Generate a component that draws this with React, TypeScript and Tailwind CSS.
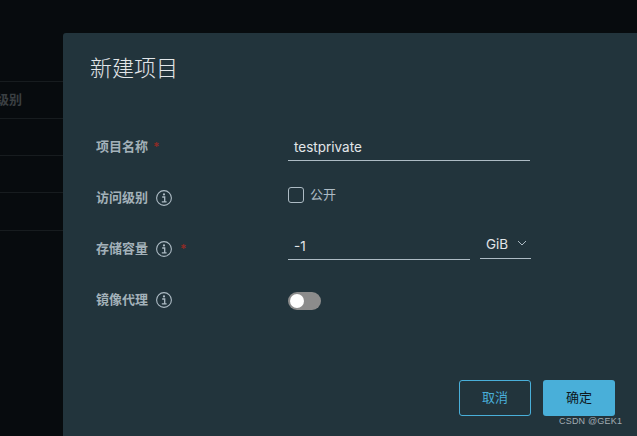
import React from "react";

function Info() {
  return (
    <svg width="16" height="16" viewBox="0 0 16 16" fill="none" className="block shrink-0 text-[#adbbc4]">
      <circle cx="8" cy="8" r="7.4" stroke="currentColor" strokeWidth="1.1" />
      <circle cx="8" cy="4.4" r="1.1" fill="currentColor" />
      <path d="M6.2 7H8.7V11.6M5.8 11.8H10.6" stroke="currentColor" strokeWidth="1.3" />
    </svg>
  );
}

function Row({ label, info, req, children }: { label: string; info?: boolean; req?: boolean; children: React.ReactNode }) {
  return (
    <div className="flex items-center h-[51px]">
      <div className="w-[192px] flex items-center text-[13px] font-bold text-[#a3b1b9]">
        <span>{label}</span>
        {info && <span className="ml-[8px]"><Info /></span>}
        {req && <span className={`text-[#8c2b26] text-[12px] ${info ? "ml-[8px]" : "ml-[5px]"}`}>*</span>}
      </div>
      {children}
    </div>
  );
}

export default function App() {
  return (
    <div className="relative w-[637px] h-[436px] overflow-hidden bg-[#070b0e] font-['Inter','Noto_Sans_CJK_SC',sans-serif]">
      <div className="pt-[81px]">
        {["级别", "", "", "", ""].map((t, i) => (
          <div key={i} className="h-[37.15px] border-t border-[#171c1f] flex items-center text-[13px] font-bold text-[#3a3f42] pl-0 -ml-[4px]">
            {t && <span>{t}</span>}
          </div>
        ))}
      </div>
      <div className="absolute left-[63px] top-[33px] right-0 bottom-0 rounded-tl-[3px] bg-[#22343c] pl-[27px] pt-[18px]">
        <h1 className="text-[22px] leading-[34px] font-light text-[#e2e6e9]">新建项目</h1>
        <div className="mt-[36px] ml-[6px] w-[441px]">
          <Row label="项目名称" req>
            <div className="w-[242px] h-[29px] border-b border-[#adbbc4] pl-[6px] text-[13.5px] leading-[30px] text-[#e2e6e9] -mt-[1px]">testprivate</div>
          </Row>
          <Row label="访问级别" info>
            <div className="flex items-center gap-[6px] -mt-[5px]">
              <span className="w-4 h-4 rounded-[3px] border border-[#adbbc4]" />
              <span className="text-[13px] text-[#adbbc4]">公开</span>
            </div>
          </Row>
          <Row label="存储容量" info req>
            <div className="flex gap-[10px] items-end -mt-[7px]">
              <div className="w-[182px] h-[29px] border-b border-[#adbbc4] pl-[6px] text-[13.5px] leading-[30px] text-[#e2e6e9]">-1</div>
              <div className="w-[51px] h-[28px] mb-[1px] border-b border-[#adbbc4] pl-[6px] text-[13.5px] leading-[28px] text-[#e2e6e9] flex items-center">
                <span>GiB</span>
                <svg width="10" height="6" viewBox="0 0 10 6" fill="none" className="ml-[9px] -mt-[2px]">
                  <path d="M1 1L5 5L9 1" stroke="#adbbc4" strokeWidth="1" />
                </svg>
              </div>
            </div>
          </Row>
          <Row label="镜像代理" info>
            <div className="w-[33px] h-[18px] mt-[2px] rounded-full bg-[#8c8c8c] p-[2px]">
              <div className="w-[14px] h-[14px] rounded-full bg-white" />
            </div>
          </Row>
        </div>
      </div>
      <div className="absolute left-[459px] top-[380px] flex gap-[12px]">
        <button className="w-[72px] h-[36px] rounded-[3px] border border-[#49afd9] text-[13px] text-[#49afd9]">取消</button>
        <button className="w-[72px] h-[36px] rounded-[3px] bg-[#49afd9] text-[13px] text-[#0f171c]">确定</button>
      </div>
      <div className="absolute left-[559px] top-[416px] text-[9px] leading-[10px] text-[#a3adb3] tracking-[0.2px] font-['Liberation_Sans',sans-serif]">CSDN @GEK1</div>
    </div>
  );
}
